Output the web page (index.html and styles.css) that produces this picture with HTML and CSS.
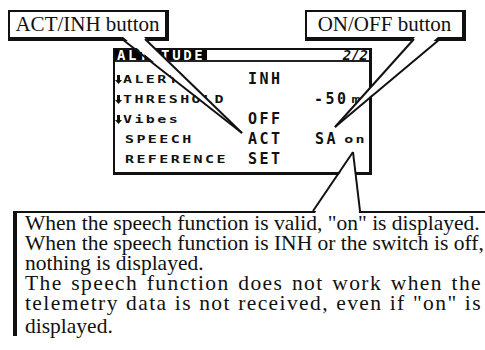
FILE: index.html
```html
<!DOCTYPE html>
<html lang="en">
<head>
  <meta charset="UTF-8">
  <meta name="viewport" content="width=device-width, initial-scale=1.0">
  <title>Altitude speech</title>
  <link rel="stylesheet" href="styles.css">
</head>
<body>
  <div class="page">
    <div class="tags">
      <div class="tag">ACT/INH button</div>
      <div class="tag">ON/OFF button</div>
    </div>

    <div class="lcd">
      <div class="lcd-head">
        <span class="title">ALTITUDE</span>
        <span class="page-no">2/2</span>
      </div>
      <div class="lcd-rows">
        <div><svg class="arr" viewBox="0 0 7 9"><path d="M2 0h3v5h2L3.5 9 0 5h2z"/></svg><span class="lbl">ALERT</span></div>
        <div><span class="val">INH</span></div>
        <div></div>

        <div><svg class="arr" viewBox="0 0 7 9"><path d="M2 0h3v5h2L3.5 9 0 5h2z"/></svg><span class="lbl">THRESHOLD</span></div>
        <div></div>
        <div class="end pad"><span class="val">-50</span><span class="lbl unit">m</span></div>

        <div><svg class="arr" viewBox="0 0 7 9"><path d="M2 0h3v5h2L3.5 9 0 5h2z"/></svg><span class="lbl">Vibes</span></div>
        <div><span class="val">OFF</span></div>
        <div></div>

        <div class="indent"><span class="lbl">SPEECH</span></div>
        <div><span class="val">ACT</span></div>
        <div class="end"><span class="val">SA</span><span class="lbl unit-on">on</span></div>

        <div class="indent"><span class="lbl">REFERENCE</span></div>
        <div><span class="val">SET</span></div>
        <div></div>
      </div>
    </div>

    <div class="note">
      <span class="line">When the speech function is valid, "on" is displayed.</span>
      <span class="line">When the speech function is INH or the switch is off,</span>
      <span class="line">nothing is displayed.</span>
      <span class="line spread">The speech function does not work when the</span>
      <span class="line spread">telemetry data is not received, even if "on" is</span>
      <span class="line last">displayed.</span>
    </div>

    <!-- callout tails drawn over the screen -->
    <svg class="pointers" width="485" height="350" viewBox="0 0 485 350">
      <polygon points="123,37 144,37 242,133" fill="#fff"/>
      <line x1="122" y1="39" x2="242" y2="133"/>
      <line x1="145" y1="39" x2="242" y2="133"/>

      <polygon points="415,37 438,37 335,127" fill="#fff"/>
      <line x1="414" y1="39" x2="335" y2="127"/>
      <line x1="440" y1="39" x2="335" y2="127"/>

      <polygon points="315,213 359,213 353,152" fill="#fff"/>
      <line x1="313" y1="211" x2="353" y2="152"/>
      <line x1="360" y1="211" x2="353" y2="152"/>
    </svg>
  </div>
</body>
</html>
```

FILE: styles.css
```css
body {
  margin: 0;
  background-color: #ffffff;
  font-family: "Liberation Serif", "Times New Roman", serif;
  color: #111;
}
.page {
  position: relative;
  width: 485px;
  height: 350px;
  overflow: hidden;
}
.tags {
  display: flex;
  justify-content: space-between;
  padding: 10px 19px 0 8px;
}
.tag {
  box-sizing: border-box;
  width: 161px;
  height: 31px;
  border: 2px solid #111;
  border-right-width: 4px;
  border-bottom-width: 4px;
  font-size: 21px;
  line-height: 25px;
  text-align: center;
}

/* lcd screen */
.lcd {
  width: 254px;
  margin: 7px 0 0 113px;
  border: 2px solid #111;
  border-right-width: 3px;
  border-bottom-width: 3px;
  font-family: "DejaVu Sans Mono", monospace;
  font-weight: bold;
}
.lcd-head {
  display: flex;
  justify-content: space-between;
  align-items: center;
  height: 10px;
  border-bottom: 2px solid #222;
}
.title {
  height: 10px;
  padding: 0 2px;
  background-color: #000;
  color: #fff;
  font-size: 14px;
  line-height: 11px;
  letter-spacing: 2.6px;
}
.page-no {
  font-size: 14px;
  line-height: 11px;
  font-style: italic;
  padding-right: 1px;
}
.lcd-rows {
  display: grid;
  grid-template-columns: 133px 52px 1fr;
  grid-auto-rows: 20px;
  align-items: center;
  padding: 7px 2px 3px 0;
}
.lcd-rows > div {
  display: flex;
  align-items: center;
}
.indent {
  padding-left: 10px;
}
.end {
  justify-content: flex-end;
  white-space: nowrap;
}
.pad {
  padding-right: 4px;
}
.arr {
  width: 7px;
  height: 9px;
  margin: 1px 1px 0 0;
  fill: #111;
}
.lbl {
  display: inline-block;
  font-size: 15px;
  letter-spacing: 2.4px;
  transform: scaleY(0.72);
}
.val {
  font-size: 15px;
  letter-spacing: 2.5px;
}
.unit {
  margin-left: 3px;
}
.unit-on {
  margin-left: 6px;
}

/* note under the screen */
.note {
  width: 457px;
  margin: 36px 0 0 13px;
  padding: 0 5px 0 8px;
  border-left: 4px solid #111;
  border-top: 2px solid #111;
  font-size: 21.5px;
  line-height: 20px;
}
.line {
  display: block;
  white-space: nowrap;
}
.spread {
  letter-spacing: 1.4px;
  text-align: justify;
  text-align-last: justify;
  white-space: normal;
}
.last {
  margin-top: 3px;
}

.pointers {
  position: absolute;
  top: 0;
  left: 0;
  pointer-events: none;
}
.pointers line {
  stroke: #111;
  stroke-width: 2;
}
```
